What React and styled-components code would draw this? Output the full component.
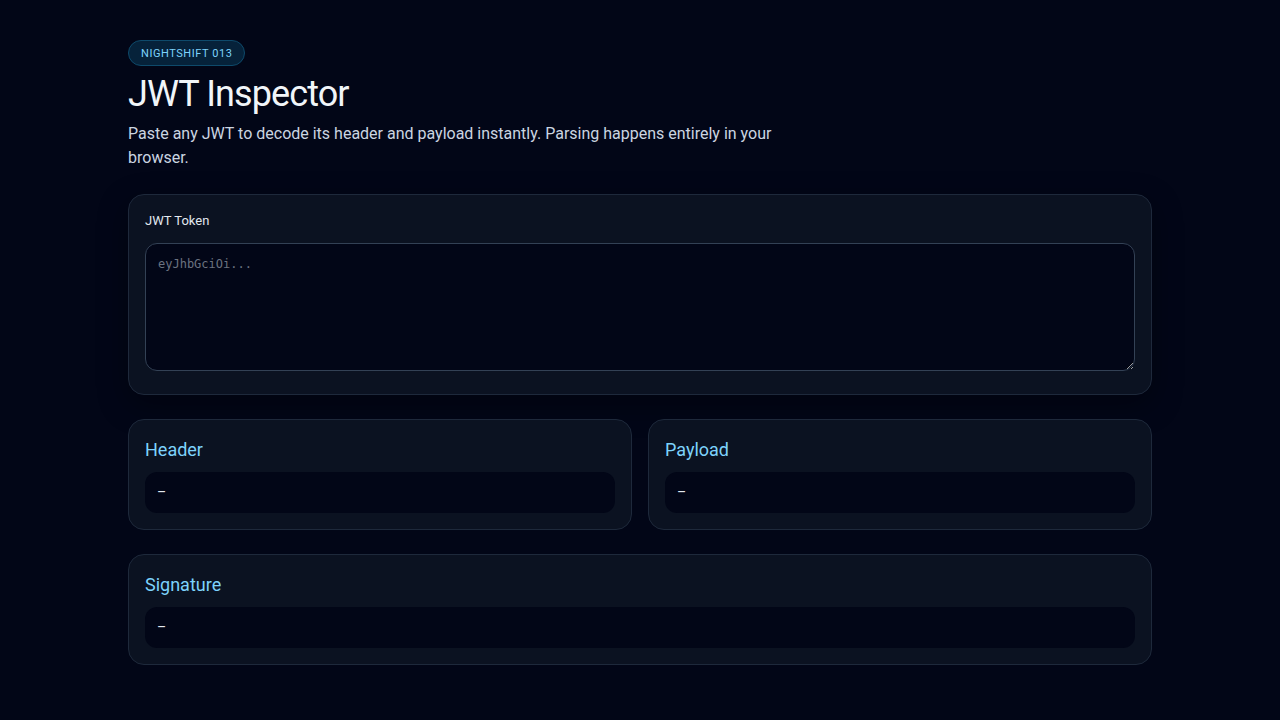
import React, { useState } from "react";
import styled, { createGlobalStyle } from "styled-components";

const GlobalStyle = createGlobalStyle`
  * { box-sizing: border-box; }
  html, body {
    margin: 0;
    background: #020617;
    color: #e2e8f0;
    font-family: Roboto, "Liberation Sans", sans-serif;
  }
`;

const Page = styled.main`
  width: 1024px;
  margin: 0 auto;
  padding: 40px 0 56px;
  display: flex;
  flex-direction: column;
  gap: 24px;
`;

const Intro = styled.header`
  display: flex;
  flex-direction: column;
  align-items: flex-start;
  gap: 6px;
`;

const Badge = styled.span`
  display: inline-flex;
  align-items: center;
  height: 26px;
  padding: 0 12px;
  border-radius: 999px;
  border: 1px solid #0e4a6b;
  background: #06223a;
  color: #7dd3fc;
  font-size: 11px;
  letter-spacing: 0.05em;
`;

const Title = styled.h1`
  margin: 0;
  font-size: 36px;
  font-weight: 400;
  line-height: 44px;
  letter-spacing: -0.025em;
  color: #f1f5f9;
`;

const Lead = styled.p`
  margin: 0;
  max-width: 680px;
  font-size: 16px;
  line-height: 24px;
  color: #cbd5e1;
`;

const Card = styled.section`
  background: #0b1221;
  border: 1px solid #1e293b;
  border-radius: 16px;
  padding: ${(p) => (p.$raised ? "16px 16px 23px" : "16px")};
  display: flex;
  flex-direction: column;
  gap: ${(p) => (p.$raised ? "12px" : "8px")};
  box-shadow: ${(p) => (p.$raised ? "0 10px 30px rgba(0, 0, 0, 0.35)" : "none")};
`;

const Label = styled.label`
  font-size: 13px;
  line-height: 20px;
  color: #e2e8f0;
`;

const TokenInput = styled.textarea`
  width: 100%;
  height: 128px;
  resize: vertical;
  padding: 12px;
  border-radius: 12px;
  border: 1px solid #334155;
  background: #020617;
  color: #e2e8f0;
  font-family: "DejaVu Sans Mono", "Liberation Mono", monospace;
  font-size: 12px;
  line-height: 16px;
  outline: none;
  &::placeholder { color: #6b7280; }
`;

const Split = styled.div`
  display: grid;
  grid-template-columns: 1fr 1fr;
  gap: 16px;
`;

const PartTitle = styled.h2`
  margin: 0;
  font-size: 18px;
  font-weight: 400;
  line-height: 28px;
  color: #7dd3fc;
`;

const Output = styled.pre`
  margin: 0;
  padding: 11px 12px;
  min-height: 41px;
  border-radius: 12px;
  background: #020617;
  color: #e2e8f0;
  font-family: Roboto, "Liberation Sans", sans-serif;
  font-size: 14px;
  line-height: 19px;
  white-space: pre-wrap;
`;

const Part = ({ title, value }) => (
  <Card>
    <PartTitle>{title}</PartTitle>
    <Output>{value || "–"}</Output>
  </Card>
);

export default function App() {
  const [token, setToken] = useState("");

  return (
    <>
      <GlobalStyle />
      <Page>
        <Intro>
          <Badge>NIGHTSHIFT 013</Badge>
          <Title>JWT Inspector</Title>
          <Lead>
            Paste any JWT to decode its header and payload instantly. Parsing happens entirely in your browser.
          </Lead>
        </Intro>

        <Card $raised>
          <Label htmlFor="token">JWT Token</Label>
          <TokenInput
            id="token"
            placeholder="eyJhbGciOi..."
            value={token}
            onChange={(e) => setToken(e.target.value)}
          />
        </Card>

        <Split>
          <Part title="Header" />
          <Part title="Payload" />
        </Split>

        <Part title="Signature" />
      </Page>
    </>
  );
}
